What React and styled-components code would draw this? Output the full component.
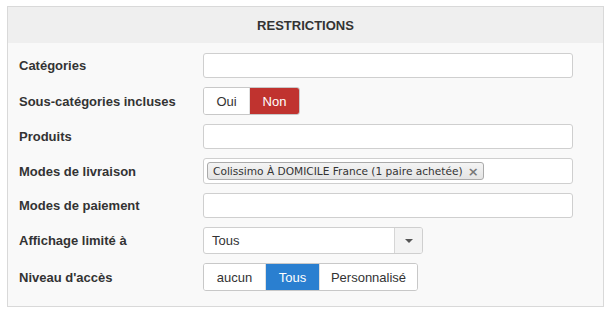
import React from 'react';
import styled, { createGlobalStyle } from 'styled-components';

const GlobalStyle = createGlobalStyle`
  body {
    margin: 0;
    background: #ffffff;
    font-family: 'Liberation Sans', Arial, sans-serif;
    color: #333;
  }
`;

export const Panel = styled.div`
  margin: 6px 7px 0 7px;
  width: 597px;
  box-sizing: border-box;
  border: 1px solid #d9d9d9;
  background: #f9f9f9;
`;
export const PanelHeader = styled.div`
  height: 36px;
  background: #efefef;
  display: flex;
  align-items: center;
  justify-content: center;
  font-size: 13px;
  font-weight: 700;
  color: #333;
`;
export const PanelBody = styled.div`
  padding: 10px 11px 15px 11px;
  display: flex;
  flex-direction: column;
  gap: 9px;
`;
export const Row = styled.div`
  display: grid;
  grid-template-columns: 184px 370px;
  align-items: center;
`;
export const Label = styled.div`
  font-size: 13px;
  font-weight: 700;
  color: #333;
`;
export const TextInput = styled.div`
  height: ${(p) => p.$h || 25}px;
  box-sizing: border-box;
  background: #fff;
  border: 1px solid #cfcfcf;
  border-radius: 3px;
  display: flex;
  align-items: center;
  padding: 0 3px;
`;
export const Tag = styled.span`
  display: inline-flex;
  align-items: center;
  gap: 5px;
  height: 18px;
  box-sizing: border-box;
  padding: 0 4px 0 5px;
  border: 1px solid #aaa;
  border-radius: 3px;
  background: linear-gradient(#f4f4f4, #e4e4e4);
  font-family: 'DejaVu Sans', sans-serif;
  font-size: 10.6px;
  color: #333;
`;
export const TagClose = styled.span`
  color: #777;
  font-size: 13px;
  font-weight: 700;
  line-height: 1;
`;
export const BtnGroup = styled.div`
  display: inline-flex;
  justify-self: start;
  height: 28px;
  box-sizing: border-box;
  border: 1px solid #c8c8c8;
  border-radius: 3px;
  overflow: hidden;
  background: #fff;
`;
export const Btn = styled.div`
  display: flex;
  align-items: center;
  justify-content: center;
  width: ${(p) => p.$w}px;
  font-size: 13px;
  color: ${(p) => (p.$active ? '#fff' : '#333')};
  background: ${(p) => p.$bg || '#fff'};
  & + & {
    border-left: ${(p) => (p.$active ? 'none' : '1px solid #e0e0e0')};
  }
`;
export const Select = styled.div`
  width: 220px;
  height: 27px;
  box-sizing: border-box;
  border: 1px solid #cfcfcf;
  border-radius: 3px;
  background: #fff;
  display: flex;
  overflow: hidden;
`;
export const SelectValue = styled.div`
  flex: 1;
  display: flex;
  align-items: center;
  padding-left: 8px;
  font-size: 13px;
  color: #333;
`;
export const SelectArrow = styled.div`
  width: 27px;
  border-left: 1px solid #d6d6d6;
  background: #f3f3f3;
  display: flex;
  align-items: center;
  justify-content: center;
`;
export const Caret = styled.span`
  width: 0;
  height: 0;
  border-left: 4px solid transparent;
  border-right: 4px solid transparent;
  border-top: 4px solid #555;
`;

const App = () => {
  return (
    <>
      <GlobalStyle />
      <Panel>
        <PanelHeader>RESTRICTIONS</PanelHeader>
        <PanelBody>
          <Row>
            <Label>Catégories</Label>
            <TextInput />
          </Row>
          <Row>
            <Label>Sous-catégories incluses</Label>
            <BtnGroup>
              <Btn $w={45}>Oui</Btn>
              <Btn $w={49} $active $bg='#c0332f'>Non</Btn>
            </BtnGroup>
          </Row>
          <Row>
            <Label>Produits</Label>
            <TextInput />
          </Row>
          <Row>
            <Label>Modes de livraison</Label>
            <TextInput $h={26}>
              <Tag>
                Colissimo À DOMICILE France (1 paire achetée)
                <TagClose>×</TagClose>
              </Tag>
            </TextInput>
          </Row>
          <Row>
            <Label>Modes de paiement</Label>
            <TextInput />
          </Row>
          <Row>
            <Label>Affichage limité à</Label>
            <Select>
              <SelectValue>Tous</SelectValue>
              <SelectArrow>
                <Caret />
              </SelectArrow>
            </Select>
          </Row>
          <Row>
            <Label>Niveau d'accès</Label>
            <BtnGroup>
              <Btn $w={61}>aucun</Btn>
              <Btn $w={53} $active $bg='#2a7fd0'>Tous</Btn>
              <Btn $w={97}>Personnalisé</Btn>
            </BtnGroup>
          </Row>
        </PanelBody>
      </Panel>
    </>
  );
};

export default App;
